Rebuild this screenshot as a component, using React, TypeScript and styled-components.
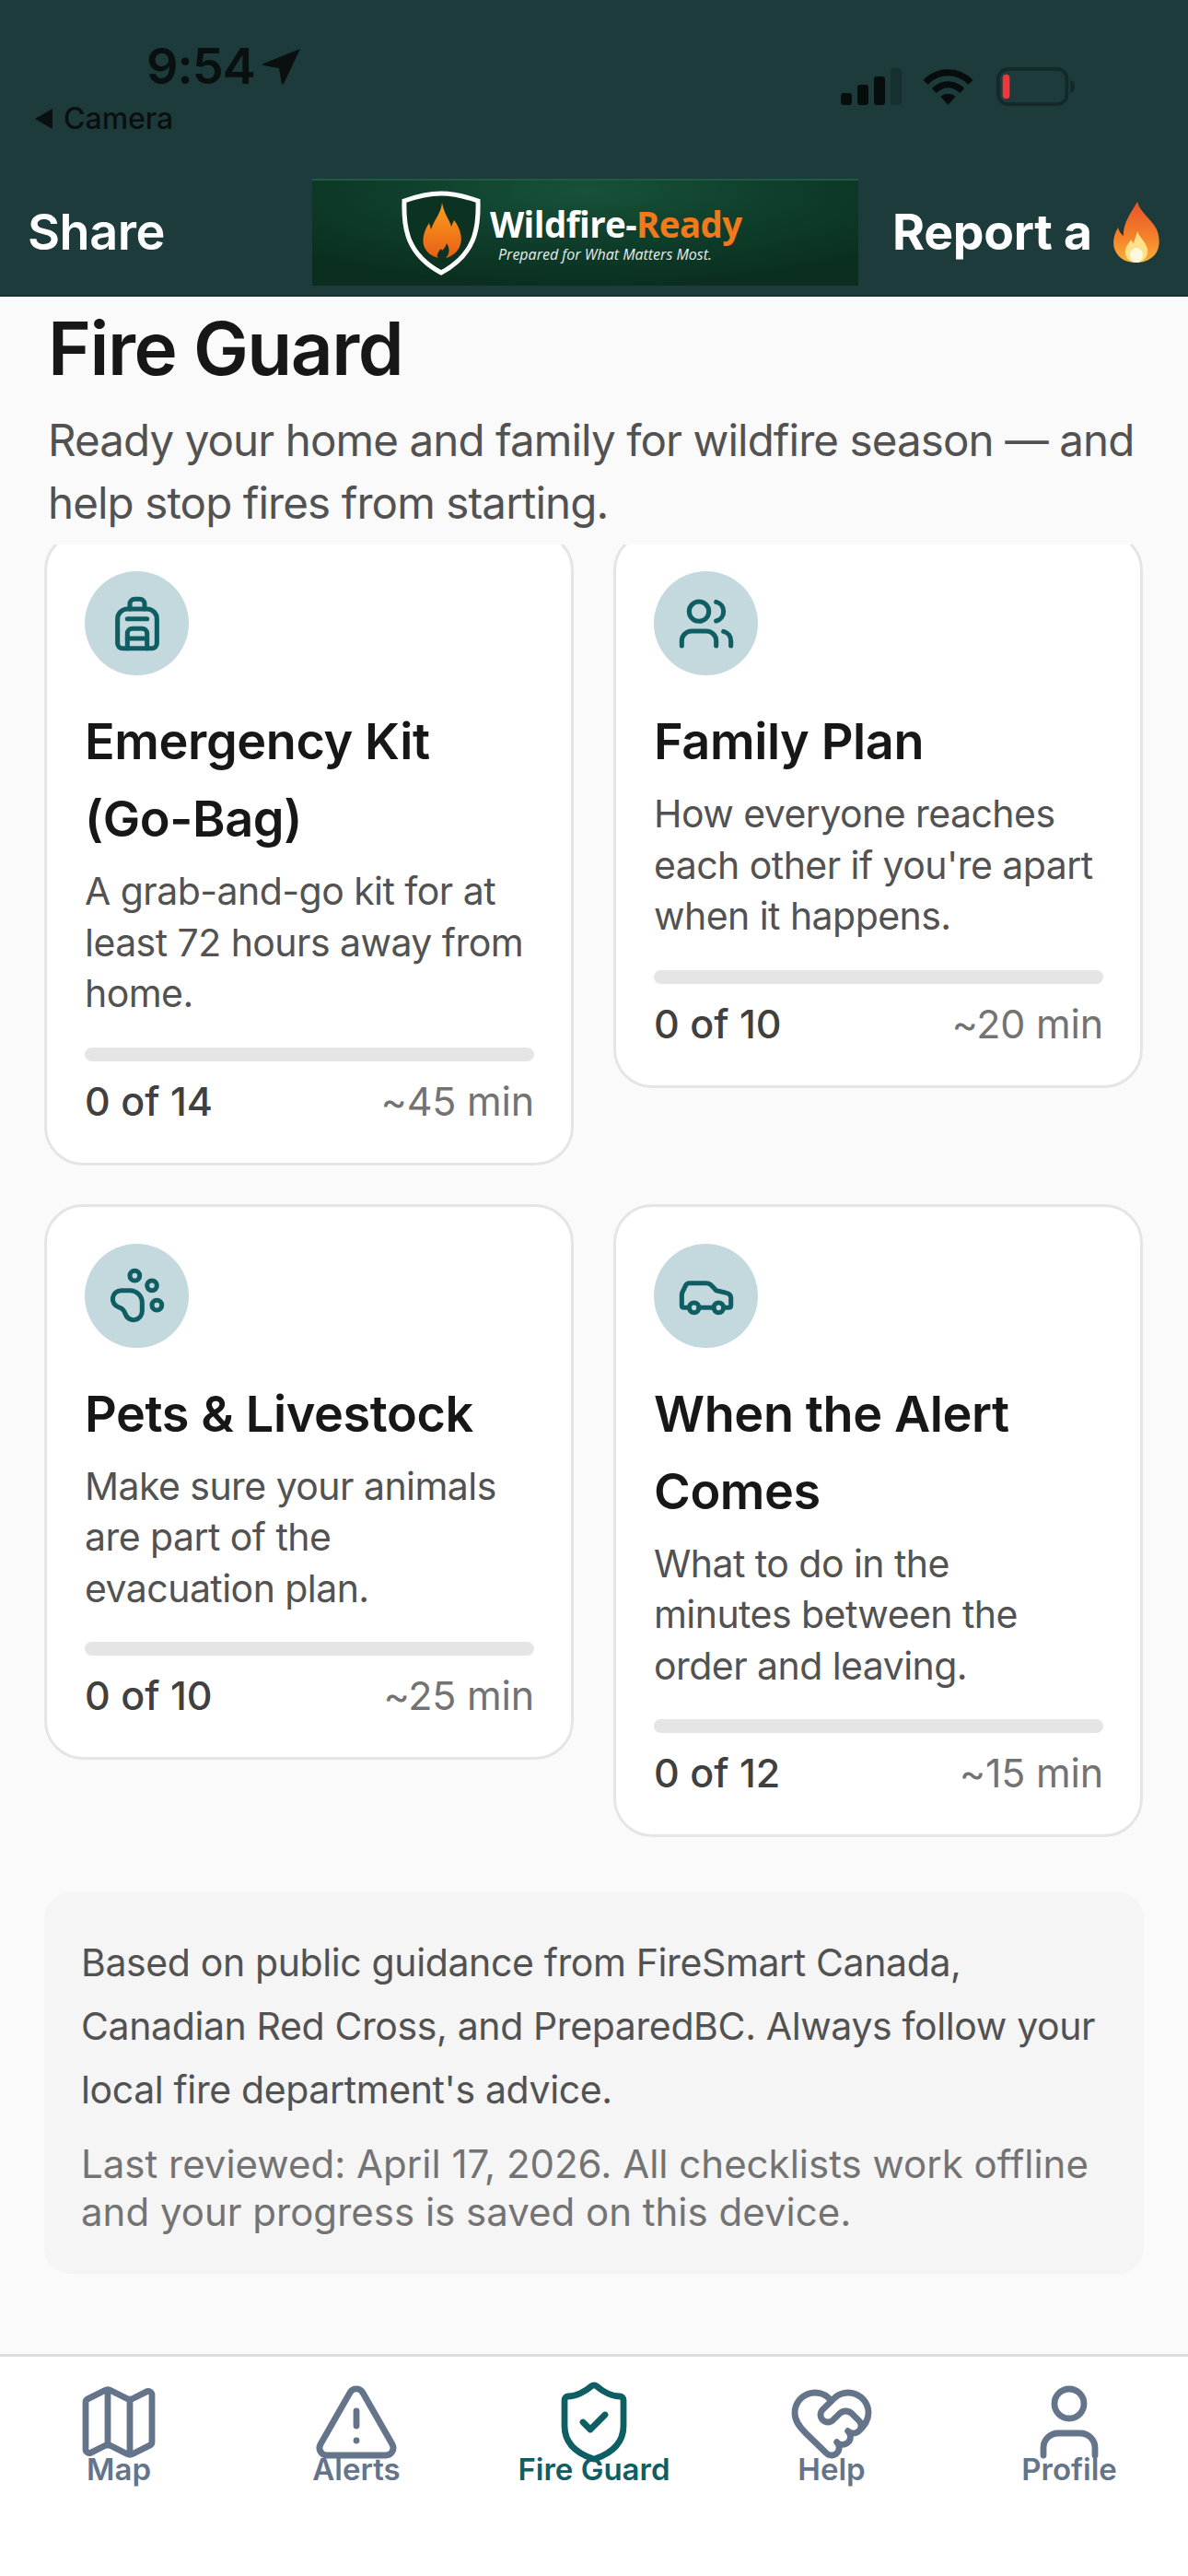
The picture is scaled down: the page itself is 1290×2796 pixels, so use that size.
import React from "react";
import styled, { createGlobalStyle } from "styled-components";
import { Backpack, Users, PawPrint, Car, Map as MapIcon, TriangleAlert, ShieldCheck, HeartHandshake, User } from "lucide-react";

const Global = createGlobalStyle`
  html, body { margin: 0; padding: 0; background: #fafafa; }
  * { box-sizing: border-box; }
  body { font-family: Inter, "Noto Sans", sans-serif; }
`;

const Page = styled.div`
  width: 1290px; height: 2796px; display: flex; flex-direction: column; overflow: hidden; background: #fafafa;
`;
const Header = styled.header`
  height: 322px; flex: none; background: #1d3b3b; border-bottom: 2px solid #14302f; display: flex; flex-direction: column;
`;
const StatusBar = styled.div`
  height: 194px; display: flex; justify-content: space-between; color: #0a0f0f; flex: none;
`;
const StatusLeft = styled.div`
  display: flex; flex-direction: column; padding: 39px 0 0 38px;
`;
const TimeRow = styled.div`
  display: flex; align-items: center; gap: 8px; padding-left: 121px; font-size: 54px; font-weight: 600; line-height: 66px; letter-spacing: -1px;
`;
const BackLink = styled.div`
  display: flex; align-items: center; gap: 11px; font-size: 32px; line-height: 36px; font-weight: 500; margin-top: 6px;
`;
const StatusRight = styled.div`
  display: flex; align-items: center; gap: 22px; padding: 72px 120px 74px 0; height: 190px;
`;
const NavRow = styled.div`
  flex: 1; display: flex; align-items: flex-start; padding-top: 0;
`;
const Share = styled.div`
  width: 339px; padding: 24px 0 0 30px; color: #fff; font-size: 54px; line-height: 68px; font-weight: 600; letter-spacing: -0.5px;
`;
const Logo = styled.div`
  width: 593px; height: 116px; background: radial-gradient(ellipse 70% 90% at 50% 10%, #17523a 0%, #0f3f2c 50%, #0a2f1f 100%);
  border-top: 2px solid #1f5a42; display: flex; align-items: center; padding-left: 97px; gap: 10px; flex: none;
`;
const LogoText = styled.div`
  display: flex; flex-direction: column; align-items: flex-start;
`;
const LogoTitle = styled.div`
  font-family: "Open Sans", sans-serif; font-weight: 700; font-size: 38.5px; line-height: 46px; letter-spacing: -0.6px; color: #fff;
`;
const LogoAccent = styled.span`
  color: #f07a1c;
`;
const LogoTag = styled.div`
  font-family: "Open Sans", sans-serif; font-style: italic; font-size: 16px; line-height: 20px; color: #e8efe9; padding-left: 9px;
`;
const Report = styled.div`
  flex: 1; display: flex; align-items: center; gap: 22px; padding: 24px 0 0 37px; color: #fff; font-size: 53.5px; line-height: 68px; font-weight: 700; letter-spacing: -0.3px;
`;
const Intro = styled.section`
  flex: none; height: 269px; padding: 10px 30px 0 52px;
`;
const Title = styled.h1`
  margin: 0; font-size: 80px; line-height: 92px; font-weight: 600; color: #171717; letter-spacing: -1.5px;
`;
const Lead = styled.p`
  margin: 20px 0 0; font-size: 47.5px; line-height: 68px; color: #525252; letter-spacing: -0.9px;
`;
const Scroll = styled.main`
  flex: 1; overflow: hidden; padding: 0 48px; min-height: 0;
`;
const Grid = styled.div`
  display: grid; grid-template-columns: 575px 575px; column-gap: 43px; row-gap: 42px; align-items: start; margin-top: -14px; margin-right: -2px;
`;
const Card = styled.article`
  background: #fff; border: 3px solid #e5e5e5; border-radius: 42px; padding: 40px 40px 37px 41px;
`;
const IconCircle = styled.div`
  width: 113px; height: 113px; border-radius: 50%; background: #c4d9de; color: #0f5e63; display: flex; align-items: center; justify-content: center; margin-bottom: 30px;
`;
const CardTitle = styled.h2`
  margin: 0; font-size: 54px; line-height: 84px; font-weight: 600; color: #171717; letter-spacing: -0.4px;
`;
const CardDesc = styled.p`
  margin: 9px 0 0; max-width: 477px; font-size: 41px; line-height: 55.5px; color: #525252; letter-spacing: -0.55px;
`;
const Bar = styled.div`
  height: 15px; border-radius: 8px; background: #e5e5e5; margin-top: 30px;
`;
const CardFoot = styled.div`
  display: flex; justify-content: space-between; align-items: center; margin-top: 13px; line-height: 60px;
`;
const Count = styled.span`
  font-size: 43px; font-weight: 500; color: #404040;
`;
const Time = styled.span`
  font-size: 43px; color: #737373; letter-spacing: -0.2px;
`;
const Note = styled.aside`
  margin-top: 60px; background: #f5f5f5; border-radius: 28px; padding: 42px 40px 38px; height: 414px; width: 1194px;
`;
const NoteText = styled.p`
  margin: 0; font-size: 41px; line-height: 69px; color: #525252; letter-spacing: -0.38px;
`;
const NoteSub = styled.p`
  margin: 20px 0 0; font-size: 42px; line-height: 52px; color: #737373;
`;
const BottomNav = styled.nav`
  flex: none; height: 241px; background: #fff; border-top: 3px solid #dedede; display: grid; grid-template-columns: repeat(5, 258px); padding-top: 25px;
`;
const Tab = styled.div<{ $active?: boolean }>`
  display: flex; flex-direction: column; align-items: center; height: 120px; color: ${p => (p.$active ? "#0f5e63" : "#64748b")};
`;
const TabIcon = styled.div`
  height: 92px; display: flex; align-items: center; justify-content: center;
`;
const TabLabel = styled.span`
  font-size: 33px; line-height: 36px; font-weight: 600; margin-top: -13px; white-space: nowrap;
`;

const tabs = [
  { label: "Map", Icon: MapIcon },
  { label: "Alerts", Icon: TriangleAlert },
  { label: "Fire Guard", Icon: ShieldCheck, active: true },
  { label: "Help", Icon: HeartHandshake },
  { label: "Profile", Icon: User },
];

const cards = [
  { Icon: Backpack, title: "Emergency Kit (Go-Bag)", desc: "A grab-and-go kit for at least 72 hours away from home.", count: "0 of 14", time: "~45 min" },
  { Icon: Users, title: "Family Plan", desc: "How everyone reaches each other if you're apart when it happens.", count: "0 of 10", time: "~20 min" },
  { Icon: PawPrint, title: "Pets & Livestock", desc: "Make sure your animals are part of the evacuation plan.", count: "0 of 10", time: "~25 min" },
  { Icon: Car, title: "When the Alert Comes", desc: "What to do in the minutes between the order and leaving.", count: "0 of 12", time: "~15 min" },
];

const Flame = () => (
  <svg width="52" height="66" viewBox="0 0 52 66">
    <defs>
      <linearGradient id="emoji" x1="0" y1="0" x2="0" y2="1">
        <stop offset="0" stopColor="#e8532a" />
        <stop offset="0.6" stopColor="#f5832a" />
        <stop offset="1" stopColor="#f9b13a" />
      </linearGradient>
    </defs>
    <path d="M27 0c3 12 15 18 21 30 5 12 3 25-6 31-5 4-11 5-16 5-8 0-15-2-20-8C-1 50 0 38 6 28c1 4 3 7 6 9C11 24 20 12 27 0z" fill="url(#emoji)" />
    <path d="M27 32c2 7 10 12 11 20 1 8-5 14-12 14s-13-5-12-13c1-6 4-8 6-12 1 2 2 3 3 4 1-4 3-9 4-13z" fill="#fde28a" />
    <ellipse cx="26" cy="58" rx="7" ry="8" fill="#fff8e0" />
  </svg>
);

const Shield = () => (
  <svg width="86" height="92" viewBox="0 0 86 92">
    <defs>
      <linearGradient id="flame" x1="0" y1="0" x2="0" y2="1">
        <stop offset="0" stopColor="#fba01e" />
        <stop offset="1" stopColor="#e85f15" />
      </linearGradient>
    </defs>
    <path d="M43 3c12 0 26 3 40 8 1 30-3 58-40 78C6 69 2 41 3 11 17 6 31 3 43 3z" fill="#0c3322" stroke="#fff" strokeWidth="5" />
    <path d="M44 13c2 12 8 18 10 26l3-7c7 9 10 20 6 29-3 6-8 10-15 12 4-4 5-10 1-16-1 4-3 6-5 8-1-4-3 0-5 4-1 1 0 3 1 4-8-2-14-7-16-14-2-9 2-18 6-24l2 7c3-10 11-17 12-29z" fill="url(#flame)" />
  </svg>
);

const Signal = () => (
  <svg width="66" height="40" viewBox="0 0 66 40">
    <rect x="0" y="27" width="12" height="13" rx="3" fill="#070c0c" />
    <rect x="18" y="18" width="12" height="22" rx="3" fill="#070c0c" />
    <rect x="36" y="9" width="12" height="31" rx="3" fill="#070c0c" />
    <rect x="54" y="0" width="12" height="40" rx="3" fill="#16302f" />
  </svg>
);

const Wifi = () => (
  <svg width="57" height="41" viewBox="0 0 56 40" fill="none" stroke="#070c0c" strokeWidth="7">
    <path d="M4 15C17 1 39 1 52 15" />
    <path d="M13 24c9-9 21-9 30 0" />
    <path d="M28 39l-8-9c5-4 11-4 16 0z" fill="#070c0c" stroke="none" />
  </svg>
);

const Battery = () => (
  <svg width="90" height="42" viewBox="0 0 90 44">
    <rect x="2" y="2" width="78" height="40" rx="11" fill="none" stroke="#13292a" strokeWidth="4" />
    <path d="M84 15c4 1 5 4 5 7s-1 6-5 7z" fill="#13292a" />
    <rect x="7" y="8" width="8" height="28" rx="4" fill="#f0383c" />
  </svg>
);

const Arrow = () => (
  <svg width="42" height="40" viewBox="0 0 42 40">
    <path d="M41 1L23 39c-1 1-2 1-2 0l-3-17L1 19c-1 0-1-2 0-2z" fill="#0a0f0f" />
  </svg>
);

export default function App() {
  return (
    <Page>
      <Global />
      <Header>
        <StatusBar>
          <StatusLeft>
            <TimeRow>9:54<Arrow /></TimeRow>
            <BackLink>
              <svg width="20" height="22" viewBox="0 0 20 22"><path d="M19 0v22L0 11z" fill="#0a0f0f" /></svg>
              Camera
            </BackLink>
          </StatusLeft>
          <StatusRight>
            <Signal />
            <Wifi />
            <Battery />
          </StatusRight>
        </StatusBar>
        <NavRow>
          <Share>Share</Share>
          <Logo>
            <Shield />
            <LogoText>
              <LogoTitle>Wildfire-<LogoAccent>Ready</LogoAccent></LogoTitle>
              <LogoTag>Prepared for What Matters Most.</LogoTag>
            </LogoText>
          </Logo>
          <Report>Report a <Flame /></Report>
        </NavRow>
      </Header>
      <Intro>
        <Title>Fire Guard</Title>
        <Lead>Ready your home and family for wildfire season — and help stop fires from starting.</Lead>
      </Intro>
      <Scroll>
        <Grid>
          {cards.map(c => (
            <Card key={c.title}>
              <IconCircle><c.Icon size={64} strokeWidth={1.9} /></IconCircle>
              <CardTitle>{c.title}</CardTitle>
              <CardDesc>{c.desc}</CardDesc>
              <Bar />
              <CardFoot><Count>{c.count}</Count><Time>{c.time}</Time></CardFoot>
            </Card>
          ))}
        </Grid>
        <Note>
          <NoteText>Based on public guidance from FireSmart Canada, Canadian Red Cross, and PreparedBC. Always follow your local fire department's advice.</NoteText>
          <NoteSub>Last reviewed: April 17, 2026. All checklists work offline and your progress is saved on this device.</NoteSub>
        </Note>
      </Scroll>
      <BottomNav>
        {tabs.map(t => (
          <Tab key={t.label} $active={t.active}>
            <TabIcon><t.Icon size={96} strokeWidth={1.7} /></TabIcon>
            <TabLabel>{t.label}</TabLabel>
          </Tab>
        ))}
      </BottomNav>
    </Page>
  );
}
